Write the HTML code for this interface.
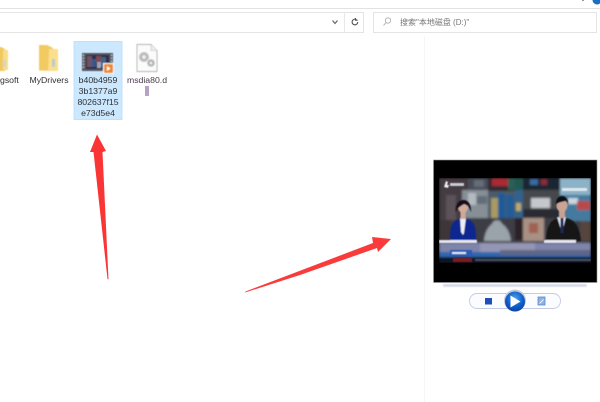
<!DOCTYPE html>
<html><head><meta charset="utf-8">
<style>
html,body{margin:0;padding:0;background:#fff}
#p{position:relative;width:600px;height:402px;overflow:hidden;background:#fff;font-family:"Liberation Sans","Noto Sans CJK SC",sans-serif;color:#333}
.t{position:absolute;font-size:8.7px;line-height:11.3px;text-align:center;color:#303030;filter:blur(.35px);white-space:nowrap}
svg{position:absolute;left:0;top:0}
</style></head><body>
<div id="p">
<svg width="600" height="402" viewBox="0 0 600 402">
<defs>
<filter id="b1"><feGaussianBlur stdDeviation="0.4"/></filter>
<filter id="b2" x="-5%" y="-5%" width="110%" height="110%"><feGaussianBlur stdDeviation="1.1"/></filter>
<filter id="b4" x="-5%" y="-5%" width="110%" height="110%"><feGaussianBlur stdDeviation="0.5"/></filter>
<filter id="b3"><feGaussianBlur stdDeviation="0.3"/></filter>
<radialGradient id="pl" cx=".5" cy=".35" r=".7"><stop offset="0" stop-color="#4aa0ec"/><stop offset=".6" stop-color="#0c5cc8"/><stop offset="1" stop-color="#0a3f9c"/></radialGradient>
</defs>
<!-- chrome lines -->
<rect x="0" y="8" width="600" height="1" fill="#e2e2e2"/>
<rect x="0" y="12" width="364" height="1" fill="#e4e4e4"/>
<rect x="0" y="32" width="364" height="1" fill="#e4e4e4"/>
<rect x="363" y="12" width="1" height="21" fill="#e4e4e4"/>
<rect x="344" y="12" width="1" height="21" fill="#e8e8e8"/>
<rect x="373.500" y="12.500" width="223" height="20" fill="#fff" stroke="#e4e4e4"/>
<rect x="424" y="36" width="1" height="366" fill="#f5f5f5"/>
<circle cx="597" cy="0" r="4.500" fill="#1a6fc0"/>
<rect x="582" y="0" width="2" height="1" fill="#999"/>
<path d="M332.500 20.500l2.500 3 2.500-3" fill="none" stroke="#666" stroke-width="1.200"/>
<path d="M357.700 22a2.800 2.800 0 1 1-1.400-2.400M355.500 18v2.200h2.200" fill="none" stroke="#555" stroke-width="1.100"/>
<circle cx="388" cy="20.500" r="2.700" fill="none" stroke="#aaa" stroke-width=".8"/>
<path d="M386 22.500l-2.500 3" stroke="#aaa" stroke-width=".9"/>

<!-- selection -->
<rect x="74" y="41.500" width="48" height="78" fill="#cce8ff" stroke="#b5dcfb" stroke-width=".8"/>

<!-- folders -->
<g filter="url(#b1)">
<path d="M-3 47h4l4 2v22h-8z" fill="#f0c860"/>
<path d="M3 50h5v20H3z" fill="#fadc86"/>
<rect x="3" y="60" width="3" height="7" fill="#cfd8c8"/>
<path d="M39 45h8l6 3v23l-14-.500z" fill="#f1ca62"/>
<path d="M49 49h9v22H48z" fill="#fbdf8c"/>
<rect x="52" y="59" width="3" height="8" fill="#b7cbd0"/>
</g>

<!-- video thumb -->
<g filter="url(#b1)">
<rect x="82" y="53" width="31" height="18" fill="#585860"/>
<path d="M83.500 54.500v15M111.500 54.500v9" stroke="#c4c4cc" stroke-width="1.200" stroke-dasharray="1.500 1.500"/>
<rect x="86" y="55" width="23" height="14" fill="#2a2e4c"/>
<rect x="87" y="56" width="5" height="11" fill="#6e5262"/>
<rect x="92" y="59" width="4" height="8" fill="#34568f"/>
<rect x="96" y="56" width="5" height="6" fill="#7e4a54"/>
<rect x="97" y="62" width="4" height="6" fill="#a0a2b4"/>
<rect x="101" y="57" width="5" height="10" fill="#445e86"/>
<rect x="103" y="63" width="11" height="11" fill="#f4f8fc"/>
<rect x="104" y="64" width="9" height="9" rx="1" fill="#f08a24"/>
<path d="M107 66l3.500 2.500-3.500 2.500z" fill="#fff"/>
</g>

<!-- dll -->
<g filter="url(#b1)">
<path d="M137 44.500h14l6 6v21h-20z" fill="#fbfbfb" stroke="#b0b0b0" stroke-width=".9"/>
<path d="M151 44.500v6h6" fill="#eee" stroke="#bbb" stroke-width=".6"/>
<circle cx="144" cy="57" r="5" fill="#bdbdbd"/><circle cx="144" cy="57" r="1.700" fill="#f2f2f2"/>
<circle cx="151" cy="63" r="3.800" fill="#b6b6b6"/><circle cx="151" cy="63" r="1.300" fill="#f2f2f2"/>
</g>

<!-- arrows -->
<g filter="url(#b3)">
<path d="M108.500 279.500L107.500 279 93.500 152 90 152 97 134.500 106 151 102.500 152z" fill="#fa3434"/>
<path d="M245 292.500L245.500 291.500 373 243 372 237 391 239 378 252 377 248 300 275z" fill="#fa3a3a"/>
</g>

<!-- player -->
<rect x="433.500" y="160" width="163.500" height="122.500" fill="#000" stroke="#999" stroke-width=".6"/>
<svg x="439" y="178" width="152" height="85" viewBox="439 178 152 85">
<g filter="url(#b2)">
<rect x="439" y="178" width="152" height="85" fill="#3e3e44"/>
<rect x="439" y="178" width="29" height="45" fill="#443a42"/>
<rect x="446" y="195" width="10" height="25" fill="#5c5258"/>
<rect x="468" y="178" width="20" height="12" fill="#464e58"/>
<rect x="474" y="180" width="10" height="7" fill="#666c76"/>
<rect x="488" y="178" width="27" height="13" fill="#342c30"/>
<rect x="492" y="178" width="16" height="8" fill="#a82a34"/>
<rect x="508" y="178" width="7" height="12" fill="#2a5f54"/>
<rect x="462" y="190" width="26" height="28" fill="#868e96"/>
<rect x="468" y="193" width="8" height="12" fill="#b4bac0"/>
<rect x="477" y="196" width="10" height="8" fill="#626e78"/>
<rect x="488" y="191" width="27" height="30" fill="#4c5c68"/>
<rect x="491" y="198" width="7" height="22" fill="#a89a64"/>
<rect x="498" y="193" width="7" height="26" fill="#1f5a98"/>
<rect x="506" y="195" width="8" height="24" fill="#245c94"/>
<rect x="478" y="218" width="37" height="23" fill="#3c3c44"/>
<path d="M484 241c1-10 5-15 8-17 1-5 9-5 10 0 4 2 8 8 9 17z" fill="#9aa2aa"/>
<rect x="515" y="178" width="8" height="12" fill="#245852"/>
<rect x="523" y="178" width="37" height="12" fill="#1e2632"/>
<rect x="530" y="179" width="8" height="6" fill="#3a6aa0"/>
<rect x="541" y="179" width="6" height="6" fill="#8a2c3c"/>
<rect x="560" y="178" width="31" height="17" fill="#8cb2c8"/>
<rect x="515" y="190" width="8" height="28" fill="#30628c"/>
<rect x="516" y="203" width="5" height="8" fill="#c0aa60"/>
<rect x="523" y="190" width="37" height="28" fill="#44484e"/>
<rect x="531" y="198" width="19" height="10" fill="#c4c8cc"/>
<rect x="523" y="209" width="37" height="9" fill="#2a2c32"/>
<rect x="560" y="195" width="31" height="26" fill="#447a9e"/>
<rect x="568" y="198" width="10" height="6" fill="#ccd6de"/>
<rect x="577" y="201" width="13" height="9" fill="#b84a4c"/>
<rect x="515" y="218" width="8" height="22" fill="#2c2426"/>
<rect x="523" y="218" width="21" height="23" fill="#a89084"/>
<rect x="529" y="223" width="9" height="10" fill="#a06250"/>
<rect x="580" y="221" width="11" height="20" fill="#54443c"/>
<rect x="439" y="220" width="12" height="21" fill="#3c3438"/>
<rect x="439" y="243" width="152" height="11" fill="#7e84aa"/>
<rect x="480" y="243" width="55" height="9" fill="#9496b4"/>
<rect x="439" y="252" width="152" height="5" fill="#2d66ae"/>
<rect x="500" y="250" width="91" height="5" fill="#5e6686"/>
<rect x="439" y="257" width="152" height="6" fill="#0e1826"/>
</g>
<g filter="url(#b4)">
<path d="M450 241c0-15 1-21 13-23 12 2 13 8 13 23z" fill="#0c2890"/>
<path d="M460 218h6l-2 15-1 2-2-3z" fill="#eceef4"/>
<rect x="460.500" y="212" width="5" height="7" fill="#cfa896"/>
<ellipse cx="463" cy="207" rx="5" ry="6" fill="#d2ac9a"/>
<path d="M456 212c-2-15 16-17 15 0-2-6-4-7-7-8-3 2-6 3-8 8z" fill="#12101a"/>
<path d="M546 241c1-16 4-22 16-24 13 2 17 8 19 24z" fill="#121216"/>
<path d="M557 217h9l-4 16z" fill="#d8deea"/>
<rect x="560.500" y="218" width="3" height="15" fill="#1c2c58"/>
<rect x="559" y="211" width="6" height="7" fill="#c8a090"/>
<ellipse cx="562" cy="205.500" rx="5.500" ry="6.500" fill="#cca494"/>
<path d="M556 205c-1-12 13-12 12 0-1-3-2-4-3-4-3 1-7 1-9 4z" fill="#0e0e12"/>
<rect x="439" y="240" width="38" height="3" fill="#e4e6f0"/>
<rect x="544" y="240" width="32" height="3" fill="#e4e6f0"/>
<rect x="450" y="250" width="22" height="6" fill="#2a5cb4"/>
<rect x="452" y="252" width="14" height="2" fill="#dfe6f4"/>
<rect x="453" y="258" width="19" height="4" fill="#7c1a22"/>
<rect x="475" y="259" width="116" height="2" fill="#5a6270" opacity=".8"/>
<path d="M444 187l2-6 2 1-1 3 2 0-1 3z" fill="#f0f0f4"/>
<rect x="450" y="183" width="14" height="3" fill="#c8ccd4"/>
<rect x="562" y="188" width="25" height="3" fill="#dde8f0"/>
</g>
</svg>
<!-- seek bar -->
<rect x="443" y="284" width="144" height="3" rx="1.500" fill="#d8dae8" filter="url(#b1)"/>
<!-- controls -->
<g filter="url(#b3)">
<rect x="469.500" y="293.500" width="91" height="15" rx="7.500" fill="#fbfcff" stroke="#c4cbe0" stroke-width=".9"/>
<rect x="485" y="298" width="7" height="6.500" fill="#1a50b8"/>
<circle cx="515" cy="300.500" r="11" fill="#c4c8d6"/>
<circle cx="515" cy="301.500" r="10" fill="url(#pl)"/>
<path d="M510.500 295.500l10 6-10 6z" fill="#fff"/>
<rect x="538" y="297" width="7" height="8" fill="#8fb0e4" stroke="#5a88cc" stroke-width=".8"/>
<path d="M539.500 303.500l4-4" stroke="#f0f4fc" stroke-width="1"/>
</g>
</svg>

<div class="t" style="left:0;top:75px">gsoft</div>
<div class="t" style="left:28px;top:75px;width:42px">MyDrivers</div>
<div class="t" style="left:74px;top:74.500px;width:48px">b40b4959<br>3b1377a9<br>802637f15<br>e73d5e4</div>
<div class="t" style="left:124px;top:75px;width:46px;color:#4a3a4a">msdia80.d<br><span style="color:#b39cc0;background:#b9a4c8">ll</span></div>
<div class="t" style="left:400px;top:16.500px;font-size:8px;color:#777;line-height:11px">搜索"本地磁盘 (D:)"</div>
</div>
</body></html>
